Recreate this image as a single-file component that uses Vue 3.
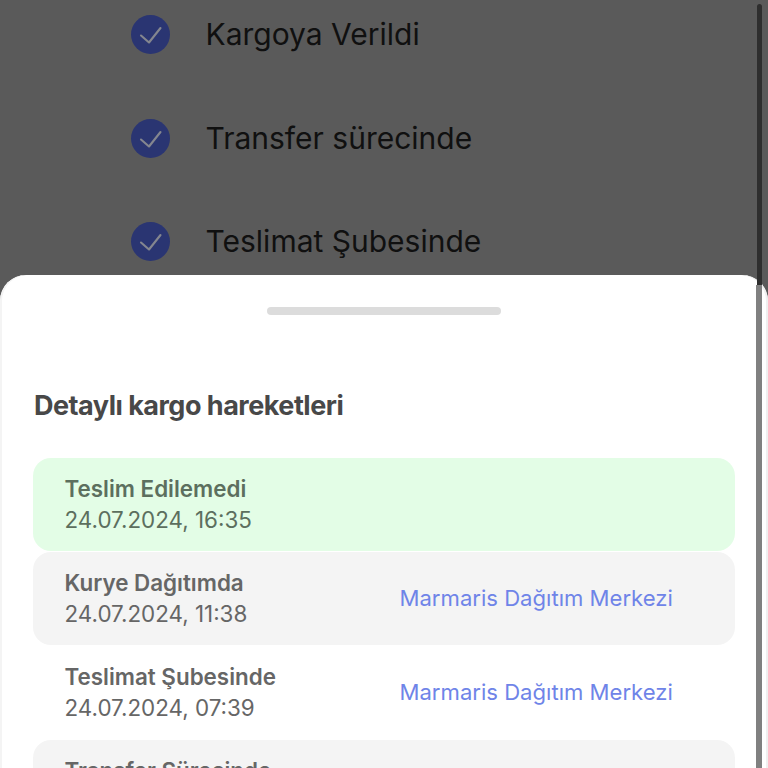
<script setup>
const steps = ['Kargoya Verildi', 'Transfer sürecinde', 'Teslimat Şubesinde']
const rows = [
  { title: 'Teslim Edilemedi', date: '24.07.2024, 16:35', place: '', tone: 'green' },
  { title: 'Kurye Dağıtımda', date: '24.07.2024, 11:38', place: 'Marmaris Dağıtım Merkezi', tone: 'gray' },
  { title: 'Teslimat Şubesinde', date: '24.07.2024, 07:39', place: 'Marmaris Dağıtım Merkezi', tone: 'plain' },
  { title: 'Transfer Sürecinde', date: '', place: '', tone: 'gray' }
]
</script>

<template>
  <div class="page">
    <section class="status">
      <div v-for="s in steps" :key="s" class="step">
        <svg class="tick" viewBox="0 0 39 39" width="39" height="39">
          <circle cx="19.5" cy="19.5" r="19.5" fill="#2a3572" />
          <path d="M10 20.5l8 7 11.5-14.5" fill="none" stroke="#84868f" stroke-width="2.1" stroke-linecap="round" stroke-linejoin="round" />
        </svg>
        <span class="step-label">{{ s }}</span>
      </div>
    </section>
    <section class="sheet">
      <div class="handle"></div>
      <h2 class="heading">Detaylı kargo hareketleri</h2>
      <div class="list">
        <div v-for="r in rows" :key="r.title" class="row" :class="r.tone">
          <div class="info">
            <div class="title">{{ r.title }}</div>
            <div v-if="r.date" class="date">{{ r.date }}</div>
          </div>
          <div class="place">{{ r.place }}</div>
        </div>
      </div>
    </section>
    <div class="bar-dark"></div>
    <div class="bar-light"></div>
  </div>
</template>

<style>
html, body { margin: 0; background: #5a5a5a; overflow: hidden; }
</style>

<style scoped>
.page {
  position: relative;
  width: 768px;
  height: 768px;
  overflow: hidden;
  background: #5a5a5a;
  font-family: Inter, "Liberation Sans", sans-serif;
  display: flex;
  flex-direction: column;
}
.status {
  height: 275px;
  flex: none;
  box-sizing: border-box;
  padding: 15px 0 0 131px;
  display: flex;
  flex-direction: column;
  gap: 64.5px;
  overflow: hidden;
}
.step {
  display: flex;
  align-items: center;
  gap: 35.5px;
  height: 39px;
}
.tick { flex: none; }
.step-label {
  font-size: 30px;
  line-height: 39px;
  color: #101010;
  white-space: nowrap;
}
.sheet {
  flex: 1;
  background: #fff;
  border-radius: 26px 26px 0 0;
  padding: 32px 33px 0 33px;
  display: flex;
  flex-direction: column;
  min-height: 0;
  box-shadow: inset 2px 0 0 #f4f4f4, inset -2px 0 0 #f0f0f0;
}
.handle {
  width: 234px;
  height: 8px;
  border-radius: 4px;
  background: #dcdcdc;
  align-self: center;
  flex: none;
}
.heading {
  margin: 73px 0 0 1px;
  font-size: 27px;
  line-height: 36px;
  font-weight: 700;
  letter-spacing: -0.5px;
  color: #484848;
}
.list {
  margin-top: 34px;
  display: flex;
  flex-direction: column;
  gap: 1px;
}
.row {
  height: 93px;
  flex: none;
  box-sizing: border-box;
  border-radius: 18px;
  padding: 15px 32px 17px;
  display: flex;
  align-items: center;
}
.row.green { background: #e3fde6; color: #5c6f5e; }
.row.gray { background: #f4f4f4; color: #666; }
.row.plain { background: #fff; color: #666; }
.info { width: 334.5px; flex: none; align-self: flex-start; }
.title {
  font-size: 22.4px;
  line-height: 31px;
  font-weight: 600;
  margin-left: -0.5px;
}
.date {
  font-size: 22.4px;
  line-height: 31px;
  font-weight: 400;
  margin-left: -0.5px;
}
.place {
  font-size: 22.1px;
  color: #6f84e8;
  white-space: nowrap;
}
.bar-dark {
  position: absolute;
  left: 757px;
  top: 4px;
  width: 5px;
  height: 281px;
  border-radius: 3px 3px 0 0;
  background: #2e2e2e;
}
.bar-light {
  position: absolute;
  left: 756px;
  top: 285px;
  width: 6px;
  height: 483px;
  background: #808080;
}
</style>
